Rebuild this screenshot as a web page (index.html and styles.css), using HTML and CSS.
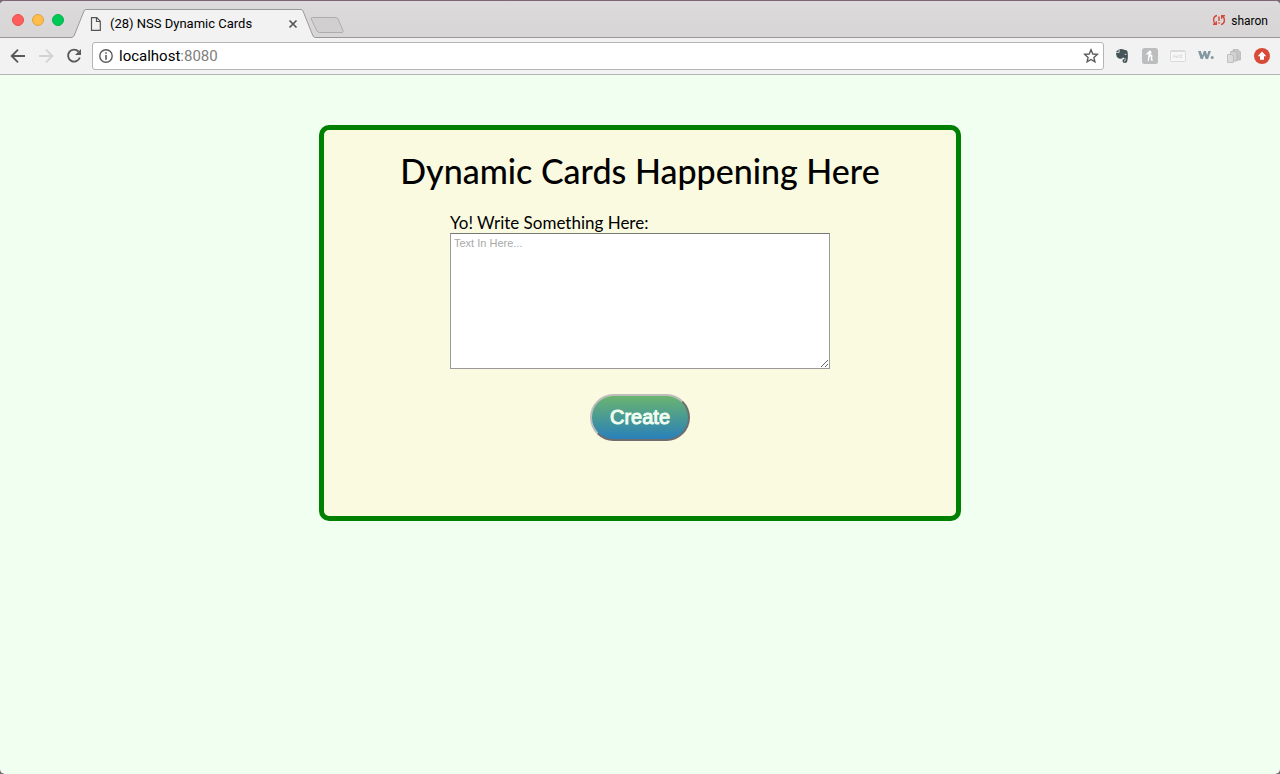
FILE: index.html
```html
<!DOCTYPE html>
<html lang="en">
<head>
<meta charset="utf-8">
<title>NSS Dynamic Cards</title>
<link rel="stylesheet" href="styles.css">
</head>
<body>
<div class="window">
  <header class="tabstrip">
    <div class="lights">
      <button class="light red" aria-label="Close"></button>
      <button class="light amber" aria-label="Minimize"></button>
      <button class="light green" aria-label="Zoom"></button>
    </div>
    <div class="tab">
      <svg class="tab-shape" width="244" height="30" viewBox="0 0 244 30" aria-hidden="true">
        <path d="M0 30V29L2 28L12 2.500Q13 1.500 14 1.500H229Q230.500 1.500 231 2.500L241 28L244 29V30Z" fill="#f2f2f2"/>
        <path d="M0 29.500L2 28L12 3Q12.500 1.500 14 1.500H229Q230.500 1.500 231 3L241 28Q241.500 29.500 244 29.500" fill="none" stroke="#999"/>
      </svg>
      <svg class="page-icon" width="12" height="14" viewBox="0 0 12 14" aria-hidden="true"><path d="M1.500 .7H6.800L10.300 4.200V13.300H1.500ZM6.500 1V4.500H10" fill="none" stroke="#555" stroke-width="1.200"/></svg>
      <span class="tab-title">(28) NSS Dynamic Cards</span>
      <button class="icon-button close" aria-label="Close tab"><svg width="10" height="10" viewBox="0 0 10 10"><path d="M1.500 1.500L8.500 8.500M8.500 1.500L1.500 8.500" stroke="#555" stroke-width="1.700"/></svg></button>
    </div>
    <button class="icon-button new-tab" aria-label="New tab"><svg width="34" height="18" viewBox="0 0 34 18"><path d="M2.500 1.500H25Q27 1.500 28 3L33 14.500Q33.500 16.500 32 16.500H9.500Q8 16.500 7 15L1.200 3Q.7 1.500 2.500 1.500Z" fill="#d1cfd0" stroke="#aeacad"/></svg></button>
    <button class="profile">
      <svg width="14" height="14" viewBox="0 0 14 14" aria-hidden="true" fill="none" stroke="#d64937" stroke-width="1.400"><path d="M5 1.500C.8 2.500 .6 7.500 3.500 10M1 10.300H4.300V7.300M9 10.500C13.200 9.500 13.400 4.500 10.500 2M13 1.700H9.700V4.700M7 2.500V7M7 8.300V9.700"/></svg>
      <span>sharon</span>
    </button>
  </header>
  <nav class="toolbar">
    <button class="icon-button" aria-label="Back"><svg width="16" height="16" viewBox="0 0 16 16"><path d="M15 8H2M8 1.700L1.700 8L8 14.300" fill="none" stroke="#5a5a5a" stroke-width="1.900"/></svg></button>
    <button class="icon-button" aria-label="Forward"><svg width="16" height="16" viewBox="0 0 16 16"><path d="M1 8H14M8 1.700L14.300 8L8 14.300" fill="none" stroke="#d3d3d3" stroke-width="1.900"/></svg></button>
    <button class="icon-button" aria-label="Reload"><svg width="16" height="16" viewBox="0 0 16 16"><path d="M12.500 3.500A6 6 0 1 0 13.800 9.500" fill="none" stroke="#5a5a5a" stroke-width="1.900"/><path d="M15 1V7H9Z" fill="#5a5a5a"/></svg></button>
    <div class="address">
      <svg width="14" height="14" viewBox="0 0 14 14" aria-hidden="true"><circle cx="7" cy="7" r="6.200" fill="none" stroke="#5a5a5a" stroke-width="1.400"/><path d="M7 3.200V4.800M7 6V10.800" stroke="#5a5a5a" stroke-width="1.600"/></svg>
      <span class="url">localhost<span class="port">:8080</span></span>
      <button class="icon-button" aria-label="Bookmark"><svg width="16" height="16" viewBox="0 0 16 16"><path d="M8 1.800L9.800 6L14.300 6.400L10.900 9.400L11.900 13.800L8 11.500L4.100 13.800L5.100 9.400L1.700 6.400L6.200 6Z" fill="none" stroke="#5a5a5a" stroke-width="1.400"/></svg></button>
    </div>
    <div class="extensions">
      <button class="icon-button" aria-label="Notes"><svg width="16" height="16" viewBox="0 0 16 16"><path d="M5.500 1L9 1.300C10 2 12.500 1.800 13.300 3C14.300 6 14 12 13 14C12 15.500 8.500 15.200 8.500 13C8.500 11.500 9.500 10.800 11 11.200V12.500H10V13.500C11.500 13.800 11.800 12 11.500 10.500C10 10.800 9.500 9.500 9 9.200C8.500 11 6.500 11 5 10.500C3 10 2.200 8 2 5H4.500Q5.500 5 5.500 4Z" fill="#455458"/><path d="M1.800 4.200L4.600 1.300V4.200Z" fill="#455458"/><path d="M10.700 6.300Q12 5.700 12.200 7" fill="none" stroke="#f2f2f2" stroke-width=".8"/></svg></button>
      <button class="icon-button" aria-label="Honey"><svg width="16" height="16" viewBox="0 0 16 16"><rect width="16" height="16" rx="2.500" fill="#bcbdbe"/><path d="M6.300 13L7.400 3.500M7 9Q10 5.800 9.800 8.500L9.300 11.300Q9.300 12.700 11 11.800M4.500 6.500L7.800 3.200L9 4.200L7.500 7.500" fill="none" stroke="#fff" stroke-width="1.300"/></svg></button>
      <button class="icon-button" aria-label="Window"><svg width="16" height="16" viewBox="0 0 16 16"><rect x=".5" y="2.500" width="15" height="11" rx="1" fill="#f7f7f7" stroke="#dadada"/><path d="M1 3.500H15" stroke="#dadada"/><path d="M4 6.500V10M4 8.300H6.500V10M8 6.500V10M12.500 7H10V9.500H12.500" fill="none" stroke="#dadada"/></svg></button>
      <button class="icon-button" aria-label="W"><svg width="16" height="16" viewBox="0 0 16 16"><path d="M0 3H2.800L4.300 7.500L5.800 3H8L9 7.500L10.300 3H13L10 11H7.700L6.300 7L4.800 11H2.700Z" fill="#8198a0"/><circle cx="14.200" cy="9.500" r="1.500" fill="#8198a0"/></svg></button>
      <button class="icon-button" aria-label="Copies"><svg width="16" height="16" viewBox="0 0 16 16" stroke="#b2b2b2" stroke-width=".7"><path d="M7 1.500H12L14.500 4V12H7Z" fill="#c5c5c5"/><path d="M4.500 3.500H9L11 5.500V13H4.500Z" fill="#d1d1d1"/><path d="M1.500 6.500H5.500L7.500 8.500V14.500H1.500Z" fill="#dcdcdc"/></svg></button>
      <button class="icon-button" aria-label="Update"><svg width="16" height="16" viewBox="0 0 16 16"><circle cx="8" cy="8" r="8" fill="#d84a38"/><path d="M8 3.500L12.300 8.200H10V11.800H6V8.200H3.700Z" fill="#fff"/></svg></button>
    </div>
  </nav>
  <main class="page">
    <section class="card">
      <h1>Dynamic Cards Happening Here</h1>
      <form class="form">
        <label for="card-text">Yo! Write Something Here:</label>
        <textarea id="card-text" placeholder="Text In Here..."></textarea>
        <button type="button" class="create">Create</button>
      </form>
    </section>
  </main>
</div>
</body>
</html>
```
FILE: styles.css
```css
* { box-sizing: border-box; }
html { background: #7d6673; }
body { margin: 0; font-family: Roboto, sans-serif; color: #000; }
button { font: inherit; color: inherit; }
.window {
  min-height: 100vh;
  display: flex;
  flex-direction: column;
  border-top: 1px solid #7d6673;
  border-radius: 5px;
  overflow: hidden;
  background: #f0fff0;
}
.tabstrip {
  height: 37px;
  display: flex;
  align-items: flex-end;
  background: linear-gradient(#dddadc, #d7d5d6);
  border-bottom: 1px solid #999;
}
.lights { display: flex; gap: 8px; padding: 0 8px 11px 12px; }
.light { width: 12px; height: 12px; padding: 0; border: 1px solid; border-radius: 50%; }
.red { background: #ff5f5c; border-color: #e65050; }
.amber { background: #ffbd4c; border-color: #dfa342; }
.green { background: #00ca56; border-color: #0bb04c; }
.tab {
  position: relative;
  width: 244px;
  height: 29px;
  margin-bottom: -1px;
  padding: 0 18px;
  display: flex;
  align-items: center;
  gap: 8px;
  font-size: 13px;
}
.tab > * { position: relative; }
.tab .tab-shape { position: absolute; left: 0; bottom: 0; }
.page-icon { flex: none; }
.tab-title { flex: 1; white-space: nowrap; }
.icon-button { display: flex; padding: 0; border: 0; background: none; }
.new-tab { margin: 0 0 3px -6px; }
.profile {
  display: flex;
  align-items: center;
  gap: 5px;
  margin-left: auto;
  padding: 0 12px 9px 0;
  border: 0;
  background: none;
  font-size: 12px;
}
.toolbar {
  height: 37px;
  display: flex;
  align-items: center;
  gap: 12px;
  padding: 0 10px;
  background: #f2f2f2;
  border-bottom: 1px solid #b6b4b6;
}
.address {
  flex: 1;
  height: 28px;
  margin-left: -2px;
  padding: 0 4px 0 6px;
  display: flex;
  align-items: center;
  gap: 6px;
  background: #fff;
  border: 1px solid #b5b5b5;
  border-radius: 3px;
  font-size: 15px;
}
.url { flex: 1; }
.port { color: #808080; }
.extensions { display: flex; gap: 12px; margin-left: -2px; }
.page { flex: 1; padding: 50px 16px; }
.card {
  max-width: 642px;
  min-height: 396px;
  margin: 0 auto;
  padding: 20px;
  background: #fafae1;
  border: 5px solid green;
  border-radius: 10px;
  font-family: Lato, sans-serif;
}
h1 { margin: 0 0 20px; font-size: 34px; line-height: 42px; font-weight: 500; text-align: center; }
.form { max-width: 380px; margin: 0 auto; display: flex; flex-direction: column; }
label { font-size: 17px; line-height: 21px; }
textarea {
  width: 100%;
  height: 136px;
  padding: 3px;
  border: 1px solid #999;
  border-top-color: #777;
  border-radius: 0;
  background: #fff;
  font: 11px "Liberation Sans", sans-serif;
}
textarea::placeholder { color: #a9a9a9; }
.create {
  align-self: center;
  width: 100px;
  height: 47px;
  margin-top: 25px;
  padding: 0;
  border: 2px solid;
  border-color: #bdbdbd #6d6d6d #6d6d6d #bdbdbd;
  border-radius: 24px;
  background: linear-gradient(#6ab46f, #2980b9);
  color: #f0fff0;
  font: 20px "Liberation Sans", sans-serif;
  -webkit-text-stroke: 1px #f0fff0;
}
```
